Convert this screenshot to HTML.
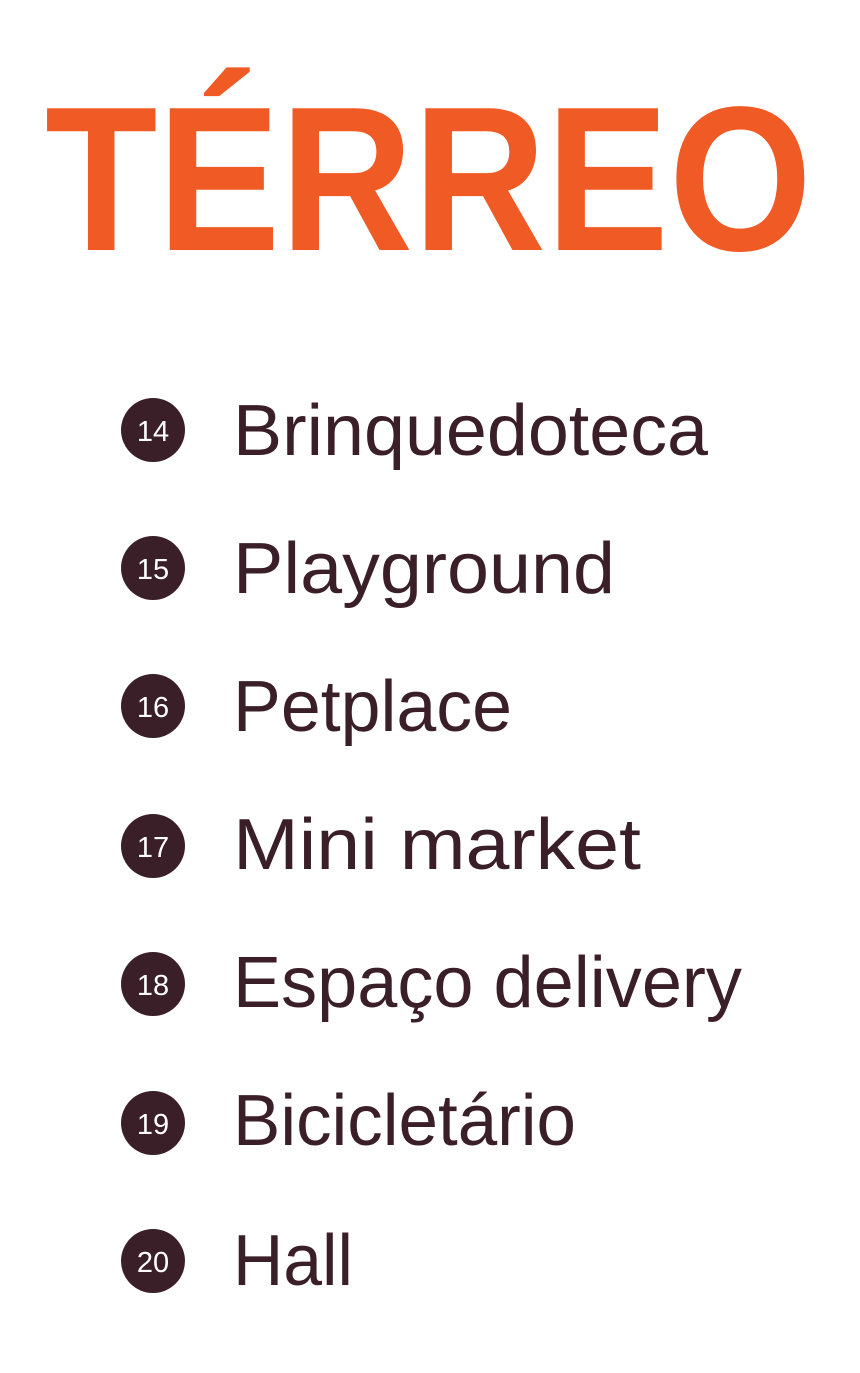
<!DOCTYPE html>
<html><head><meta charset="utf-8"><style>
html,body{margin:0;padding:0;background:#fff;width:860px;height:1373px;overflow:hidden}
svg{display:block}
</style></head><body>
<svg width="860" height="1373" viewBox="0 0 860 1373" xmlns="http://www.w3.org/2000/svg">
<text x="45" y="250" font-family="Liberation Sans, sans-serif" font-weight="bold" font-size="206" fill="#F05A24" textLength="767" lengthAdjust="spacingAndGlyphs">TÉRREO</text>
<g font-family="Liberation Sans, sans-serif" fill="#3B1F28">
<g>
<circle cx="153" cy="430" r="32"/><text x="153" y="441" font-size="29" fill="#fff" text-anchor="middle">14</text>
<text x="233" y="455" font-size="72" textLength="475" lengthAdjust="spacingAndGlyphs">Brinquedoteca</text>
</g>
<g>
<circle cx="153" cy="568" r="32"/><text x="153" y="579" font-size="29" fill="#fff" text-anchor="middle">15</text>
<text x="233" y="593" font-size="72" textLength="382" lengthAdjust="spacingAndGlyphs">Playground</text>
</g>
<g>
<circle cx="153" cy="706" r="32"/><text x="153" y="717" font-size="29" fill="#fff" text-anchor="middle">16</text>
<text x="233" y="731" font-size="72" textLength="279" lengthAdjust="spacingAndGlyphs">Petplace</text>
</g>
<g>
<circle cx="153" cy="846" r="32"/><text x="153" y="857" font-size="29" fill="#fff" text-anchor="middle">17</text>
<text x="233" y="869" font-size="72" textLength="408" lengthAdjust="spacingAndGlyphs">Mini market</text>
</g>
<g>
<circle cx="153" cy="984" r="32"/><text x="153" y="995" font-size="29" fill="#fff" text-anchor="middle">18</text>
<text x="233" y="1007" font-size="72" textLength="509" lengthAdjust="spacingAndGlyphs">Espaço delivery</text>
</g>
<g>
<circle cx="153" cy="1123" r="32"/><text x="153" y="1134" font-size="29" fill="#fff" text-anchor="middle">19</text>
<text x="233" y="1145" font-size="72" textLength="343" lengthAdjust="spacingAndGlyphs">Bicicletário</text>
</g>
<g>
<circle cx="153" cy="1261" r="32"/><text x="153" y="1272" font-size="29" fill="#fff" text-anchor="middle">20</text>
<text x="233" y="1285" font-size="72" textLength="120" lengthAdjust="spacingAndGlyphs">Hall</text>
</g>
</g>
</svg>
</body></html>
